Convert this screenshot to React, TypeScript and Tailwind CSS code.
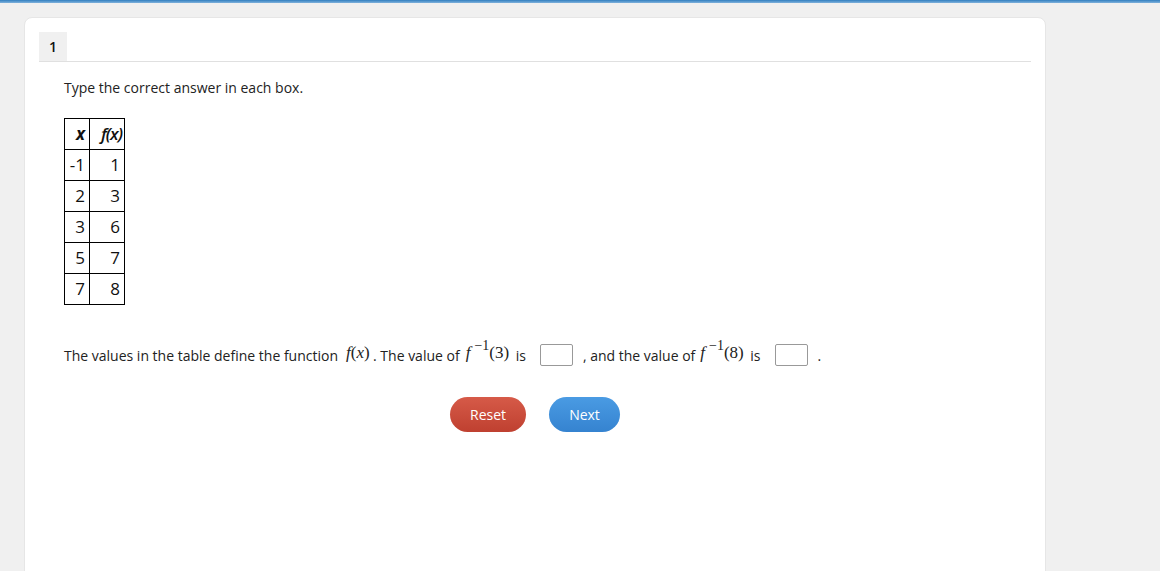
export default function App() {
  const rows = [
    ["-1", "1"],
    ["2", "3"],
    ["3", "6"],
    ["5", "7"],
    ["7", "8"],
  ]
  const math = "inline-block font-['Liberation_Serif',serif] text-[17px] leading-none whitespace-nowrap"

  return (
    <div className="min-h-[571px] bg-[#f0f0f0] font-['Open_Sans',sans-serif] text-[14px] text-[#222]">
      <div className="h-[3px] bg-gradient-to-b from-[#2f7fc0] to-[#7fb2dc]" />
      <div className="ml-[24px] mt-[14px] h-[560px] w-[1022px] rounded-t-lg border border-[#e6e6e6] bg-white px-[14px] pt-[14px]">
        <div className="flex border-b border-[#e0e0e0]">
          <div className="flex h-[29px] w-[28px] items-center justify-center bg-[#f0f0f0] text-[14px] font-semibold text-[#111]">
            1
          </div>
        </div>

        <div className="pl-[25px]">
          <p className="mt-[16px] leading-[19px]">Type the correct answer in each box.</p>

          <table className="mt-[21px] border-collapse text-[17px] text-[#111]">
            <thead>
              <tr className="h-[31px]">
                <th className="w-[25px] border border-black pr-[4px] text-right font-bold italic">x</th>
                <th className="w-[35px] border border-black pr-[2px] text-right font-semibold italic tracking-[-1px]">
                  f(x)
                </th>
              </tr>
            </thead>
            <tbody>
              {rows.map(([a, b]) => (
                <tr key={a} className="h-[31px]">
                  <td className="border border-black pr-[4px] text-right">{a}</td>
                  <td className="border border-black pr-[4px] text-right">{b}</td>
                </tr>
              ))}
            </tbody>
          </table>

          <div className="mt-[38px] flex h-[24px] items-center">
            <span>The values in the table define the function</span>
            <span className={`ml-[8px] w-[27px] ${math} relative -top-[3px]`}>
              <span className="italic">f</span>(<span className="italic">x</span>)
            </span>
            <span>. The value of</span>
            <span className={`ml-[6px] w-[45px] ${math} relative -top-[3px]`}>
              <span className="italic">f</span>
              <span className="relative -top-[8px] ml-[4px] text-[14px]">−1</span>(3)
            </span>
            <span className="ml-[5px]">is</span>
            <input className="ml-[14px] h-[22px] w-[33px] rounded-[2px] border border-[#999] bg-white" />
            <span className="ml-[10px]">, and the value of</span>
            <span className={`ml-[5px] w-[45px] ${math} relative -top-[3px]`}>
              <span className="italic">f</span>
              <span className="relative -top-[8px] ml-[4px] text-[14px]">−1</span>(8)
            </span>
            <span className="ml-[5px]">is</span>
            <input className="ml-[14px] h-[22px] w-[33px] rounded-[2px] border border-[#999] bg-white" />
            <span className="ml-[10px]">.</span>
          </div>
        </div>

        <div className="mt-[30px] flex justify-center gap-[23px]">
          <button className="h-[35px] w-[76px] rounded-full bg-gradient-to-b from-[#d65a48] to-[#bf4030] text-[14px] text-white">
            Reset
          </button>
          <button className="h-[35px] w-[71px] rounded-full bg-gradient-to-b from-[#4a9be3] to-[#3583d0] text-[14px] text-white">
            Next
          </button>
        </div>
      </div>
    </div>
  )
}
